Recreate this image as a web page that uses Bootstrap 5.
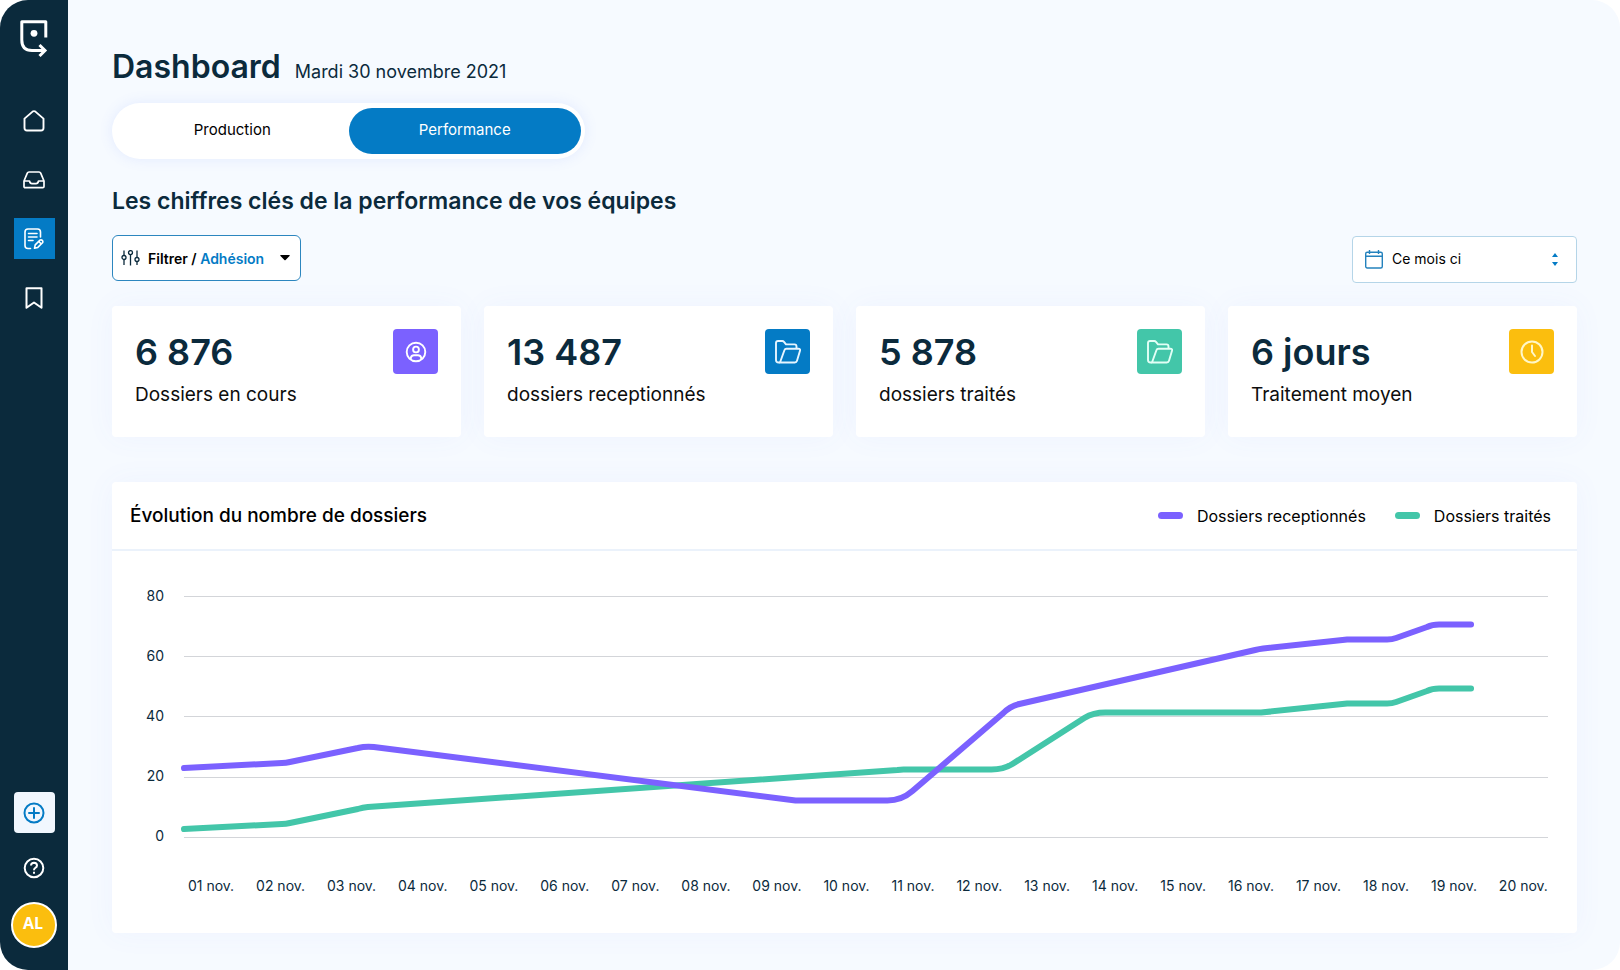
<!DOCTYPE html>
<html lang="fr">
<head>
<meta charset="utf-8">
<meta name="viewport" content="width=device-width, initial-scale=1">
<title>Dashboard</title>
<link href="https://cdn.jsdelivr.net/npm/bootstrap@5.3.0/dist/css/bootstrap.min.css" rel="stylesheet">
<style>
  :root { --navy: #0b2a3c; --blue: #047bc5; --violet: #7b61ff; --green: #43c6a9; --amber: #fbbe0e; }
  body { font-family: Inter, "Liberation Sans", sans-serif; color: var(--navy); background: #fff; }
  .app-frame { min-height: 100vh; border-radius: 28px; overflow: hidden; background: #f6faff; }
  .side-bar { width: 68px; background: var(--navy); padding: 20px 0 22px; }
  .side-menu { margin-top: 43px; gap: 18px; }
  .side-foot { gap: 14px; }
  .side-item { width: 41px; height: 41px; color: #fff; padding: 0; border: 0; background: none; }
  .side-item.active { background: var(--blue); }
  .side-item.add { background: #f1f7fe; color: var(--blue); border-radius: 4px; }
  .avatar { width: 46px; height: 46px; border: 2px solid #fff; border-radius: 50%; background: var(--amber); color: #fff; font: 700 16px/20px "Open Sans", sans-serif; padding: 0 2px 4px 0; }
  .page-main { min-width: 0; padding: 47px 43px 37px 44px; }
  .page-head { gap: 14px; }
  .page-title { font-size: 32px; line-height: 40px; font-weight: 600; }
  .page-date { font-size: 18px; line-height: 24px; }
  .soft { box-shadow: 0 0 30px rgba(90, 110, 255, .05); }
  .switcher { width: 473px; height: 56px; padding: 5px 4px; border-radius: 28px; background: #fff; margin-top: 16px; box-shadow: 0 0 14px rgba(90, 120, 255, .12); }
  .switcher .nav-link { height: 46px; border-radius: 23px; padding: 0 0 2px; font-size: 15px; color: #000; }
  .switcher .nav-link.active { background: var(--blue); color: #fff; }
  .section-title { font-size: 23px; line-height: 32px; font-weight: 600; margin-top: 26px; }
  .tool-row { margin-top: 18px; }
  .filter-btn { width: 189px; height: 46px; border: 1px solid #2c86bf; border-radius: 6px; background: #fff; font-size: 14px; font-weight: 600; color: #000; padding: 0 10px 0 8px; }
  .filter-btn .picked { color: var(--blue); }
  .period { width: 225px; height: 47px; margin-top: 1px; }
  .period select { height: 100%; border: 1px solid #b5d5e8; border-radius: 4px; background: #fff; color: #000; font-size: 14px; padding: 0 30px 2px 39px; }
  .period svg { position: absolute; top: 14px; pointer-events: none; }
  .period .cal { left: 13px; }
  .period .arrows { right: 16px; }
  .kpi-row { --bs-gutter-x: 23px; --bs-gutter-y: 23px; margin-top: 0; }
  .kpi { border: 0; border-radius: 4px; height: 131px; padding: 23px; }
  .kpi-value { font-size: 36px; line-height: 46px; font-weight: 600; }
  .kpi-label { font-size: 19px; line-height: 26px; margin-top: 7px; color: #0d0d0d; }
  .kpi-icon { width: 45px; height: 45px; border-radius: 4px; }
  .chart-card { border: 0; border-radius: 4px; margin-top: 45px; }
  .chart-head { min-height: 69px; border-bottom: 2px solid #ebf2fb; padding: 0 26px 0 18px; color: #000; }
  .chart-title { font-size: 19px; line-height: 24px; font-weight: 500; }
  .legend-list { font-size: 16px; gap: 29px; }
  .legend-list li { gap: 14px; }
  .swatch { width: 25px; height: 7px; border-radius: 4px; }
  .chart-body { padding: 35px 29px 37px 34px; font-size: 14px; line-height: 20px; }
  .y-axis { width: 18px; height: 260px; margin-right: 20px; }
  .plot { min-width: 0; padding-top: 10px; }
  .plot svg { height: 242px; overflow: visible; }
  .x-axis { margin-top: 38px; padding-left: 4px; }
  .bg-violet { background: var(--violet); }
  .bg-blue { background: var(--blue); }
  .bg-green { background: var(--green); }
  .bg-amber { background: var(--amber); }
</style>
</head>
<body>
<div class="app-frame d-flex">
  <aside class="side-bar d-flex flex-column align-items-center flex-shrink-0">
    <a href="#" aria-label="Accueil" class="d-block lh-1">
      <svg class="d-block" width="28" height="37" viewBox="0 0 28 37" fill="none" stroke="#fff" stroke-width="3" stroke-linejoin="round"><path d="M25.8 17.5V1.8H1.8V20Q1.8 30.5 12 30.5H24" stroke-linecap="butt"/><path d="M19.5 25L25 30.5L19.5 36" stroke-linejoin="miter"/><circle cx="14" cy="13.3" r="3.4" fill="#fff" stroke="none"/></svg>
    </a>
    <nav class="side-menu d-flex flex-column" aria-label="Navigation">
      <a href="#" class="side-item d-flex align-items-center justify-content-center" aria-label="Maison">
        <svg width="22" height="22" viewBox="0 0 22 22" fill="none" stroke="currentColor" stroke-width="1.9" stroke-linejoin="round"><path d="M1.500 8.600L9.600 1.600Q11 .6 12.400 1.600L20.500 8.600V18Q20.500 20.500 18 20.500H4Q1.500 20.500 1.500 18Z"/></svg>
      </a>
      <a href="#" class="side-item d-flex align-items-center justify-content-center" aria-label="Boîte de réception">
        <svg width="22" height="18" viewBox="0 0 22 18" fill="none" stroke="currentColor" stroke-width="1.7" stroke-linejoin="round"><path d="M1 10L4.300 2.200Q4.800 1 6 1H16Q17.200 1 17.700 2.200L21 10V15.500Q21 16.700 19.800 16.700H2.200Q1 16.700 1 15.500ZM1 10H6.500Q7 12.600 9 12.600H13Q15 12.600 15.500 10H21"/></svg>
      </a>
      <a href="#" class="side-item active d-flex align-items-center justify-content-center" aria-label="Dossiers" aria-current="page">
        <svg width="20" height="22" viewBox="0 0 20 22" fill="none" stroke="currentColor" stroke-width="1.6" stroke-linecap="round" stroke-linejoin="round"><path d="M6.500 20.500H4Q1 20.500 1 17.500V4Q1 1 4 1H13.500Q16.500 1 16.500 4V9M4.500 5.500H13M4.500 9H13M4.500 12.500H9"/><path d="M10.500 20.300L11.200 16.900L16 12.100Q17.200 11.400 18.300 12.400Q19.300 13.500 18.500 14.700L13.800 19.400ZM14.800 13.500L17.200 15.900"/></svg>
      </a>
      <a href="#" class="side-item d-flex align-items-center justify-content-center" aria-label="Favoris">
        <svg width="18" height="22" viewBox="0 0 18 22" fill="none" stroke="currentColor" stroke-width="2" stroke-linejoin="round"><path d="M1.500 1.200H16.500V20.800L9 15.500L1.500 20.800Z"/></svg>
      </a>
    </nav>
    <div class="side-foot d-flex flex-column align-items-center mt-auto">
      <button type="button" class="side-item add d-flex align-items-center justify-content-center" aria-label="Ajouter">
        <svg width="22" height="22" viewBox="0 0 22 22" fill="none" stroke="currentColor" stroke-width="2" stroke-linecap="round"><circle cx="11" cy="11" r="9.500"/><path d="M11 6V16M6 11H16"/></svg>
      </button>
      <button type="button" class="side-item d-flex align-items-center justify-content-center" aria-label="Aide">
        <svg width="22" height="22" viewBox="0 0 22 22" fill="none" stroke="currentColor" stroke-width="2"><circle cx="11" cy="11" r="9.300"/><path d="M8 8.500Q8.200 5.800 11 5.800Q14 5.900 14 8.500Q14 10 12.200 11Q11 11.800 11 13.200"/><path d="M11 14.800V16.700"/></svg>
      </button>
      <button type="button" class="avatar">AL</button>
    </div>
  </aside>

  <main class="page-main flex-grow-1">
    <header class="page-head d-flex align-items-baseline">
      <h1 class="page-title mb-0">Dashboard</h1>
      <span class="page-date">Mardi 30 novembre 2021</span>
    </header>

    <nav class="switcher nav nav-pills nav-fill" aria-label="Vue">
      <a href="#" class="nav-link nav-item w-50 d-flex align-items-center justify-content-center">Production</a>
      <a href="#" class="nav-link nav-item w-50 active d-flex align-items-center justify-content-center" aria-current="page">Performance</a>
    </nav>

    <h2 class="section-title mb-0">Les chiffres clés de la performance de vos équipes</h2>

    <div class="tool-row d-flex justify-content-between align-items-start">
      <button type="button" class="filter-btn d-flex align-items-center">
        <svg width="19" height="16" viewBox="0 0 19 16" fill="none" stroke="#0b2a3c" stroke-width="1.300"><path d="M3 .5V5.500M3 9.500V15M9.500 4.500V15.500M16 .5V7.500M16 11.500V15"/><circle cx="3" cy="7.500" r="2"/><circle cx="9.500" cy="2.600" r="2"/><circle cx="16" cy="9.500" r="2"/></svg>
        <span class="ms-2">Filtrer / <span class="picked">Adhésion</span></span>
        <svg class="ms-auto" width="10" height="6" viewBox="0 0 10 6"><path d="M.5 0H9.500Q10 .5 9.500 1L5.600 5Q5 5.600 4.400 5L.5 1Q0 .5 .5 0Z"/></svg>
      </button>
      <div class="period position-relative">
        <select class="form-select shadow-none" aria-label="Période"><option>Ce mois ci</option></select>
        <svg class="cal" width="18" height="19" viewBox="0 0 18 19" fill="none" stroke="#2482bd" stroke-width="1.400"><rect x=".7" y="2.200" width="16.600" height="15.800" rx="1.500"/><path d="M.7 6.300H17.300M4.500 0V4M13.500 0V4"/></svg>
        <svg class="arrows" width="12" height="19" viewBox="0 0 12 19" fill="#047bc5"><path d="M3 7L6 3L9 7ZM3 12L6 16L9 12Z"/></svg>
      </div>
    </div>

    <section class="kpi-row row row-cols-1 row-cols-sm-2 row-cols-lg-4" aria-label="Chiffres clés">
      <div class="col">
        <div class="kpi card soft flex-row justify-content-between">
          <div><div class="kpi-value">6 876</div><div class="kpi-label">Dossiers en cours</div></div>
          <div class="kpi-icon bg-violet d-flex align-items-center justify-content-center">
            <svg width="22" height="22" viewBox="0 0 22 22" fill="none" stroke="#fff" stroke-width="1.900"><circle cx="11" cy="11" r="9.300"/><circle cx="11" cy="8.500" r="2.900"/><path d="M5.800 18.200V16.800Q6.500 14.200 9 14.200H13Q15.500 14.200 16.200 16.800V18.200"/></svg>
          </div>
        </div>
      </div>
      <div class="col">
        <div class="kpi card soft flex-row justify-content-between">
          <div><div class="kpi-value">13 487</div><div class="kpi-label">dossiers receptionnés</div></div>
          <div class="kpi-icon bg-blue d-flex align-items-center justify-content-center">
            <svg width="26" height="24" viewBox="0 0 26 24" fill="none" stroke="#e6f5ff" stroke-width="1.900" stroke-linejoin="round"><path d="M5 22.500H3.500Q1 22.500 1 20V3Q1 1 3 1H7.300Q8.300 1 9 1.800L11 4.400H19.500Q21.500 4.400 21.500 6.400V8.500"/><path d="M5 22.500L9.400 10.200Q9.900 8.700 11.400 8.700H23.400Q25.600 8.700 25 10.800L22 20.800Q21.500 22.500 19.800 22.500Z"/></svg>
          </div>
        </div>
      </div>
      <div class="col">
        <div class="kpi card soft flex-row justify-content-between">
          <div><div class="kpi-value">5 878</div><div class="kpi-label">dossiers traités</div></div>
          <div class="kpi-icon bg-green d-flex align-items-center justify-content-center">
            <svg width="26" height="24" viewBox="0 0 26 24" fill="none" stroke="#e2fff6" stroke-width="1.900" stroke-linejoin="round"><path d="M5 22.500H3.500Q1 22.500 1 20V3Q1 1 3 1H7.300Q8.300 1 9 1.800L11 4.400H19.500Q21.500 4.400 21.500 6.400V8.500"/><path d="M5 22.500L9.400 10.200Q9.900 8.700 11.400 8.700H23.400Q25.600 8.700 25 10.800L22 20.800Q21.500 22.500 19.800 22.500Z"/></svg>
          </div>
        </div>
      </div>
      <div class="col">
        <div class="kpi card soft flex-row justify-content-between">
          <div><div class="kpi-value">6 jours</div><div class="kpi-label">Traitement moyen</div></div>
          <div class="kpi-icon bg-amber d-flex align-items-center justify-content-center">
            <svg width="24" height="24" viewBox="0 0 24 24" fill="none" stroke="#fff7c8" stroke-width="2" stroke-linecap="round" stroke-linejoin="round"><circle cx="12" cy="12" r="10.500"/><path d="M12 5.500V12L15 16"/></svg>
          </div>
        </div>
      </div>
    </section>

    <section class="chart-card card soft">
      <div class="chart-head d-flex align-items-center justify-content-between">
        <h3 class="chart-title mb-0">Évolution du nombre de dossiers</h3>
        <ul class="legend-list list-unstyled d-flex mb-0">
          <li class="d-flex align-items-center"><span class="swatch bg-violet"></span>Dossiers receptionnés</li>
          <li class="d-flex align-items-center"><span class="swatch bg-green"></span>Dossiers traités</li>
        </ul>
      </div>
      <div class="chart-body d-flex">
        <div class="y-axis d-flex flex-column justify-content-between text-end flex-shrink-0">
          <span>80</span><span>60</span><span>40</span><span>20</span><span>0</span>
        </div>
        <div class="plot flex-grow-1">
          <svg class="d-block w-100" viewBox="0 0 1365 242" preserveAspectRatio="none" fill="none" role="img" aria-label="Évolution du nombre de dossiers">
            <g stroke="#d3d5d9" stroke-width="1" shape-rendering="crispEdges">
              <path d="M0 .5H1365M0 60.500H1365M0 120.500H1365M0 181.500H1365M0 241.500H1365" vector-effect="non-scaling-stroke"/>
            </g>
            <g stroke-width="6" stroke-linecap="round" stroke-linejoin="round">
              <path stroke="#43c6a9" vector-effect="non-scaling-stroke" d="M0 233L98 228Q102 228 106 227L174 213Q179 211.500 184 211L714 174Q717 173.500 720 173.500H808Q820 173.500 829 168L901 122Q910 116.500 922 116.500H1078L1164 107.500H1204Q1209 107.500 1213 106L1244 95Q1249 92.500 1256 92.500H1288"/>
              <path stroke="#7b61ff" vector-effect="non-scaling-stroke" d="M0 172L98 167Q102 167 106 166L174 152Q182 150 190 151L612 204.500H704Q718 204.500 729 195L820 117Q827 110 836 108L1072 54Q1076 53 1080 52.500L1164 43.500H1204Q1209 43.500 1213 42L1244 31Q1249 28.500 1256 28.500H1288"/>
            </g>
          </svg>
          <div class="x-axis d-flex justify-content-between text-nowrap">
            <span>01 nov.</span><span>02 nov.</span><span>03 nov.</span><span>04 nov.</span><span>05 nov.</span><span>06 nov.</span><span>07 nov.</span><span>08 nov.</span><span>09 nov.</span><span>10 nov.</span><span>11 nov.</span><span>12 nov.</span><span>13 nov.</span><span>14 nov.</span><span>15 nov.</span><span>16 nov.</span><span>17 nov.</span><span>18 nov.</span><span>19 nov.</span><span>20 nov.</span>
          </div>
        </div>
      </div>
    </section>
  </main>
</div>
<script src="https://cdn.jsdelivr.net/npm/bootstrap@5.3.0/dist/js/bootstrap.bundle.min.js"></script>
</body>
</html>
